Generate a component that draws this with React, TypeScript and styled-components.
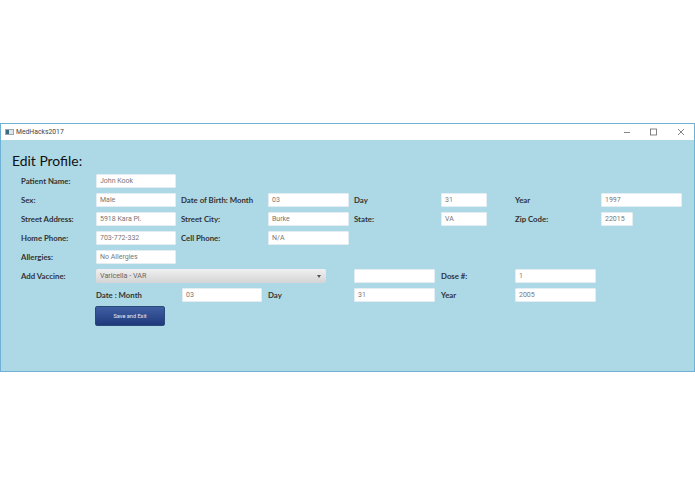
import styled, { createGlobalStyle } from 'styled-components';

const GlobalStyle = createGlobalStyle`
  html, body {
    margin: 0;
    padding: 0;
    background: #fff;
  }
  body {
    font-family: Lato, 'Noto Sans', sans-serif;
  }
`;

const Page = styled.div`
  width: 695px;
  height: 494px;
  padding-top: 123px;
  box-sizing: border-box;
  overflow: hidden;
`;

const Window = styled.div`
  height: 249px;
  box-sizing: border-box;
  border: 1px solid #6fb1d6;
  background: #add8e6;
  display: flex;
  flex-direction: column;
`;

const TitleBar = styled.div`
  height: 16px;
  background: #fff;
  display: flex;
  align-items: center;
  padding-left: 4px;
  flex-shrink: 0;
`;

const TitleText = styled.span`
  font-family: Roboto, sans-serif;
  font-size: 6.8px;
  color: #444;
  flex: 1;
  margin-left: 2px;
`;

const WinButton = styled.button`
  width: 27px;
  height: 16px;
  border: 0;
  padding: 0;
  background: none;
  display: flex;
  align-items: center;
  justify-content: center;
  color: #666;
`;

const Content = styled.div`
  padding: 11px 0 0 11px;
`;

const Heading = styled.h1`
  margin: 0 0 1px;
  font-size: 13.9px;
  line-height: 20px;
  height: 22px;
  font-weight: 400;
  color: #111;
`;

const Form = styled.div`
  display: grid;
  grid-template-columns: 70px 80px 82px 81px 82px 69px 81px 82px;
  grid-auto-rows: 14px;
  column-gap: 5px;
  row-gap: 5px;
  padding-left: 9px;
`;

const Label = styled.label<{ $col?: number }>`
  font-size: 7.8px;
  font-weight: 700;
  line-height: 14px;
  color: #333;
  white-space: nowrap;
  grid-column: ${({ $col }) => $col ?? 'auto'};
`;

const Field = styled.div<{ $col?: number; $width?: number; $inset?: number }>`
  grid-column: ${({ $col }) => $col ?? 'auto'};
  width: ${({ $width }) => ($width ? `${$width}px` : 'auto')};
  margin-left: ${({ $inset }) => $inset ?? 0}px;
  height: 14px;
  box-sizing: border-box;
  background: #fff;
  border: 1px solid #e4eef2;
  border-radius: 1px;
  padding-left: 3px;
  font-family: Roboto, sans-serif;
  font-size: 7px;
  line-height: 12px;
  color: #777;
`;

const Select = styled.div`
  grid-column: 2 / 5;
  width: 230px;
  height: 14px;
  box-sizing: border-box;
  background: linear-gradient(#f0f0f0, #d4d4d4);
  border-radius: 2px;
  padding: 0 4px;
  font-family: Roboto, sans-serif;
  font-size: 7.2px;
  line-height: 14px;
  color: #666;
  display: flex;
  justify-content: space-between;
  align-items: center;
`;

const Caret = styled.span`
  width: 0;
  height: 0;
  margin-right: 1px;
  border-left: 2.5px solid transparent;
  border-right: 2.5px solid transparent;
  border-top: 3px solid #555;
`;

const SaveButton = styled.button`
  grid-column: 2;
  width: 70px;
  height: 20px;
  padding: 0;
  margin: -1px 0 0 -1px;
  background: linear-gradient(#3f5fa3, #1f3a7c);
  border: 1px solid #2a4a78;
  border-radius: 2px;
  font-family: Roboto, sans-serif;
  font-size: 5.6px;
  color: #e8ecf5;
`;

export default function App() {
  return (
    <>
      <GlobalStyle />
      <Page>
        <Window>
          <TitleBar>
            <svg width="9" height="6" viewBox="0 0 9 6">
              <rect x="0.5" y="0.5" width="8" height="5" fill="#dfe6ea" stroke="#9aa8b2" />
              <rect x="1" y="1" width="3" height="4" fill="#3d6a80" />
            </svg>
            <TitleText>MedHacks2017</TitleText>
            <WinButton aria-label="Minimize">
              <svg width="8" height="8" viewBox="0 0 8 8">
                <path d="M1 4.5h6" stroke="currentColor" strokeWidth="0.8" />
              </svg>
            </WinButton>
            <WinButton aria-label="Maximize">
              <svg width="8" height="8" viewBox="0 0 8 8">
                <rect x="0.5" y="1" width="6" height="6" fill="none" stroke="currentColor" strokeWidth="0.8" />
              </svg>
            </WinButton>
            <WinButton aria-label="Close">
              <svg width="8" height="8" viewBox="0 0 8 8">
                <path d="M1 1l6 6M7 1L1 7" stroke="currentColor" strokeWidth="0.8" />
              </svg>
            </WinButton>
          </TitleBar>
          <Content>
            <Heading>Edit Profile:</Heading>
            <Form>
              <Label $col={1}>Patient Name:</Label>
              <Field $col={2}>John Kook</Field>

              <Label $col={1}>Sex:</Label>
              <Field $col={2}>Male</Field>
              <Label $col={3}>Date of Birth: Month</Label>
              <Field $col={4}>03</Field>
              <Label $col={5}>Day</Label>
              <Field $col={6} $width={46}>31</Field>
              <Label $col={7}>Year</Label>
              <Field $col={8} $width={81}>1997</Field>

              <Label $col={1}>Street Address:</Label>
              <Field $col={2}>5918 Kara Pl.</Field>
              <Label $col={3}>Street City:</Label>
              <Field $col={4}>Burke</Field>
              <Label $col={5}>State:</Label>
              <Field $col={6} $width={46}>VA</Field>
              <Label $col={7}>Zip Code:</Label>
              <Field $col={8} $width={32}>22015</Field>

              <Label $col={1}>Home Phone:</Label>
              <Field $col={2}>703-772-332</Field>
              <Label $col={3}>Cell Phone:</Label>
              <Field $col={4}>N/A</Field>

              <Label $col={1}>Allergies:</Label>
              <Field $col={2}>No Allergies</Field>

              <Label $col={1}>Add Vaccine:</Label>
              <Select>
                Varicella - VAR
                <Caret />
              </Select>
              <Field $col={5} $width={81} />
              <Label $col={6}>Dose #:</Label>
              <Field $col={7}>1</Field>

              <Label $col={2}>Date : Month</Label>
              <Field $col={3} $width={80} $inset={1}>03</Field>
              <Label $col={4}>Day</Label>
              <Field $col={5} $width={81}>31</Field>
              <Label $col={6}>Year</Label>
              <Field $col={7}>2005</Field>

              <SaveButton>Save and Exit</SaveButton>
            </Form>
          </Content>
        </Window>
      </Page>
    </>
  );
}
